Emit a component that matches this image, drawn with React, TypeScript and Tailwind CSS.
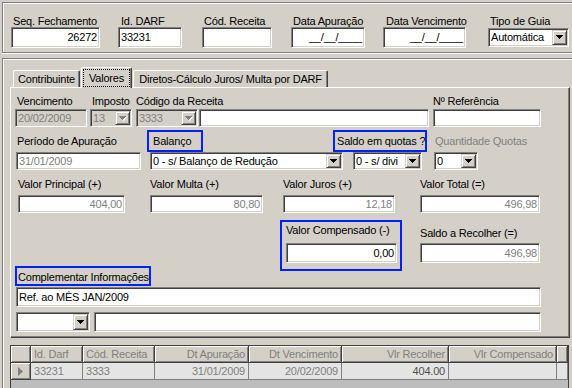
import React from 'react';

// classic win9x bevels
const sunken =
  'border border-t-[#808080] border-l-[#808080] border-b-white border-r-white shadow-[inset_1px_1px_0_#404040,inset_-1px_-1px_0_#d4d0c8] p-[1px]';
const raised =
  'border border-t-[#d4d0c8] border-l-[#d4d0c8] border-b-[#404040] border-r-[#404040] shadow-[inset_1px_1px_0_#ffffff,inset_-1px_-1px_0_#808080]';
const blueBox = 'border-2 border-[#0020ff]';

const TRI = 'M0 0h7v1h-1v1h-1v1h-1v1h-1v-1h-1v-1h-1v-1h-1z';

function Arrow({ disabled }: { disabled?: boolean }) {
  return (
    <svg width="8" height="5" viewBox="0 0 8 5" shapeRendering="crispEdges">
      {disabled ? (
        <>
          <path d={TRI} transform="translate(1 1)" fill="#ffffff" />
          <path d={TRI} fill="#808080" />
        </>
      ) : (
        <path d={TRI} fill="#000000" />
      )}
    </svg>
  );
}

interface EditProps {
  className?: string;
  text?: string;
  right?: boolean;
  muted?: boolean;
  face?: boolean;
}

function Edit({ className = '', text = '', right, muted, face }: EditProps) {
  return (
    <div
      className={`${sunken} flex items-center overflow-hidden whitespace-nowrap ${right ? 'justify-end' : ''} ${
        face ? 'bg-[#d4d0c8]' : 'bg-white'
      } ${muted ? 'text-[#808080]' : 'text-black'} ${className}`}
    >
      <span className="px-[1px]">{text}</span>
    </div>
  );
}

function Combo({ className = '', text = '', muted, face, disabled }: EditProps & { disabled?: boolean }) {
  return (
    <div className={`${sunken} flex items-stretch ${face ? 'bg-[#d4d0c8]' : 'bg-white'} ${className}`}>
      <div
        className={`flex-1 min-w-0 flex items-center overflow-hidden whitespace-nowrap px-[1px] ${
          muted ? 'text-[#808080]' : 'text-black'
        }`}
      >
        {text}
      </div>
      <div className={`${raised} w-[15px] shrink-0 flex items-center justify-center bg-[#d4d0c8]`}>
        <Arrow disabled={disabled} />
      </div>
    </div>
  );
}

function Field({ className = '', label, value }: { className?: string; label: string; value: string }) {
  return (
    <div className={className}>
      <div className="h-[14px] whitespace-nowrap">{label}</div>
      <Edit className="mt-[3px] h-[18px]" right muted text={value} />
    </div>
  );
}

function TopGroup() {
  return (
    <div className="h-[51px] w-[600px] border border-[#808080] shadow-[inset_1px_1px_0_#ffffff,0_1px_0_#ffffff] pl-[8px] pt-[12px] flex">
      <div className="w-[89px]">
        <div className="h-[12px] pl-[2px] whitespace-nowrap">Seq. Fechamento</div>
        <Edit className="h-[21px]" right text="26272" />
      </div>
      <div className="ml-[18px] w-[64px]">
        <div className="h-[12px] pl-[3px] whitespace-nowrap">Id. DARF</div>
        <Edit className="h-[21px]" text="33231" />
      </div>
      <div className="ml-[20px] w-[70px]">
        <div className="h-[12px] pl-[2px] whitespace-nowrap">Cód. Receita</div>
        <Edit className="h-[21px]" />
      </div>
      <div className="ml-[19px] w-[74px]">
        <div className="h-[12px] pl-[2px] whitespace-nowrap">Data Apuração</div>
        <Edit className="h-[21px]" right text="__/__/____" />
      </div>
      <div className="ml-[18px] w-[83px]">
        <div className="h-[12px] pl-[3px] whitespace-nowrap">Data Vencimento</div>
        <Edit className="h-[21px]" right text="__/__/____" />
      </div>
      <div className="ml-[22px] w-[81px]">
        <div className="h-[12px] pl-[2px] whitespace-nowrap">Tipo de Guia</div>
        <Combo className="mt-[1px] h-[19px]" text="Automática" />
      </div>
    </div>
  );
}

function Tabs() {
  return (
    <div className="flex items-end h-[28px] pl-[10px] whitespace-nowrap">
      <div className="h-[17px] w-[67px] rounded-t-[2px] border-t border-l border-r border-t-white border-l-white border-r-[#404040] shadow-[inset_-1px_0_0_#808080] flex items-center justify-center">
        Contribuinte
      </div>
      <div className="relative z-10 mb-[-1px] ml-[1px] h-[21px] w-[51px] rounded-t-[2px] bg-[#d4d0c8] border-t border-l border-r border-t-white border-l-white border-r-[#404040] shadow-[inset_-1px_0_0_#808080] flex items-start justify-center pt-[1px]">
        <span className="h-[18px] w-[47px] border border-dotted border-black leading-[16px] text-center">Valores</span>
      </div>
      <div className="ml-[1px] h-[17px] w-[195px] rounded-t-[2px] border-t border-l border-r border-t-white border-l-white border-r-[#404040] shadow-[inset_-1px_0_0_#808080] flex items-center justify-center">
        Diretos-Cálculo Juros/ Multa por DARF
      </div>
    </div>
  );
}

function ValoresPanel() {
  return (
    <div className="ml-[7px] w-[560px] h-[251px] border border-t-white border-l-white border-r-[#404040] border-b-[#404040] shadow-[inset_-1px_-1px_0_#808080] pl-[4px]">
      {/* Vencimento / Imposto / Código */}
      <div className="flex h-[14px] mt-[7px] whitespace-nowrap">
        <div className="w-[72px] pl-[2px]">Vencimento</div>
        <div className="ml-[3px] w-[42px] pl-[2px]">Imposto</div>
        <div className="ml-[4px] w-[293px]">Código da Receita</div>
        <div className="ml-[4px] w-[108px]">Nº Referência</div>
      </div>
      <div className="flex h-[18px]">
        <Edit className="w-[72px]" face muted text="20/02/2009" />
        <Combo className="ml-[3px] w-[42px]" face muted disabled text="13" />
        <Combo className="ml-[4px] w-[62px]" face muted disabled text="3333" />
        <Edit className="ml-[1px] w-[230px]" />
        <Edit className="ml-[4px] w-[108px]" />
      </div>

      {/* Período / Balanço / Quotas */}
      <div className="flex h-[22px] mt-[3px] items-center whitespace-nowrap">
        <div className="ml-[2px] w-[125px]">Período de Apuração</div>
        <div className={`ml-[5px] w-[56px] h-[22px] ${blueBox} flex items-center pl-[4px]`}>Balanço</div>
        <div className={`ml-[130px] w-[94px] h-[22px] ${blueBox} flex items-center pl-[2px]`}>Saldo em quotas ?</div>
        <div className="ml-[8px] text-[#808080]">Quantidade Quotas</div>
      </div>
      <div className="flex h-[18px]">
        <Edit className="ml-[1px] w-[125px]" muted text="31/01/2009" />
        <Combo className="ml-[9px] w-[193px]" text="0 - s/ Balanço de Redução" />
        <Combo className="ml-[10px] w-[69px]" text="0 - s/ divi" />
        <Combo className="ml-[12px] w-[44px]" text="0" />
      </div>

      {/* Valores */}
      <div className="flex mt-[8px]">
        <Field className="ml-[3px] w-[107px]" label="Valor Principal (+)" value="404,00" />
        <Field className="ml-[25px] w-[113px]" label="Valor Multa (+)" value="80,80" />
        <Field className="ml-[20px] w-[112px]" label="Valor Juros (+)" value="12,18" />
        <Field className="ml-[25px] w-[120px]" label="Valor Total (=)" value="496,98" />
      </div>

      <div className="flex mt-[7px] whitespace-nowrap">
        <div className="w-[136px] pt-[46px]">
          <div className={`h-[20px] ${blueBox} flex items-end pl-[1px]`}>Complementar Informações</div>
        </div>
        <div className={`ml-[129px] w-[122px] h-[51px] ${blueBox} pt-[2px] pl-[4px]`}>
          <div className="h-[14px]">Valor Compensado (-)</div>
          <Edit className="mt-[5px] w-[111px] h-[20px]" right text="0,00" />
        </div>
        <div className="ml-[18px] w-[120px] pt-[7px]">
          <div className="h-[14px]">Saldo a Recolher (=)</div>
          <Edit className="mt-[2px] h-[20px]" right muted text="496,98" />
        </div>
      </div>

      <Edit className="mt-[1px] ml-[1px] w-[525px] h-[20px]" text="Ref. ao MÊS JAN/2009" />
      <div className="flex mt-[5px] ml-[1px] h-[20px]">
        <Combo className="w-[74px]" />
        <Edit className="ml-[4px] w-[447px]" />
      </div>
    </div>
  );
}

const columns = [
  { title: '', w: 'w-[20px]', right: false },
  { title: 'Id. Darf', w: 'w-[52px]', right: false },
  { title: 'Cód. Receita', w: 'w-[72px]', right: false },
  { title: 'Dt Apuração', w: 'w-[94px]', right: true },
  { title: 'Dt Vencimento', w: 'w-[93px]', right: true },
  { title: 'Vlr Recolher', w: 'w-[107px]', right: true },
  { title: 'Vlr Compensado', w: 'w-[108px]', right: true },
  { title: '', w: 'w-[11px]', right: false },
];

const row = ['', '33231', '3333', '31/01/2009', '20/02/2009', '404.00', '', ''];

function DarfGrid() {
  return (
    <div className="ml-[7px] mt-[7px] w-[559px] h-[60px] border border-[#404040] bg-[#bdbdbd] whitespace-nowrap">
      <div className="flex h-[17px]">
        {columns.map((c, i) => (
          <div
            key={i}
            className={`${c.w} shrink-0 bg-[#d4d0c8] border-r border-b border-r-[#404040] border-b-[#404040] shadow-[inset_1px_1px_0_#ffffff,inset_-1px_-1px_0_#808080] px-[3px] flex items-center overflow-hidden text-[#808080] ${
              c.right ? 'justify-end' : ''
            }`}
          >
            {c.title}
          </div>
        ))}
      </div>
      <div className="flex h-[17px]">
        {columns.map((c, i) =>
          i === 0 ? (
            <div
              key={i}
              className={`${c.w} shrink-0 bg-[#d4d0c8] border-r border-b border-r-[#404040] border-b-[#404040] shadow-[inset_1px_1px_0_#ffffff,inset_-1px_-1px_0_#808080] flex items-center justify-center`}
            >
              <svg width="5" height="9" viewBox="0 0 5 9">
                <polygon points="0,0 5,4.5 0,9" fill="#808080" />
              </svg>
            </div>
          ) : (
            <div
              key={i}
              className={`${c.w} shrink-0 bg-[#e4e4e4] border-r border-b border-[#808080] px-[3px] flex items-center overflow-hidden ${
                c.right ? 'justify-end' : ''
              } ${i === 5 ? 'text-[#505050]' : 'text-[#808080]'}`}
            >
              {row[i]}
            </div>
          )
        )}
      </div>
    </div>
  );
}

export default function App() {
  return (
    <div className="w-[572px] h-[388px] overflow-hidden bg-[#d4d0c8] font-['Liberation_Sans',Arial,sans-serif] text-[11px] tracking-[-0.2px] leading-[13px] text-black select-none">
      <div className="pt-[2px] pl-[2px]">
        <TopGroup />
        <div className="mt-[5px] w-[600px] h-[400px] border-t border-l border-t-[#808080] border-l-[#808080] shadow-[inset_1px_1px_0_#ffffff]">
          <Tabs />
          <ValoresPanel />
          <DarfGrid />
        </div>
      </div>
    </div>
  );
}
